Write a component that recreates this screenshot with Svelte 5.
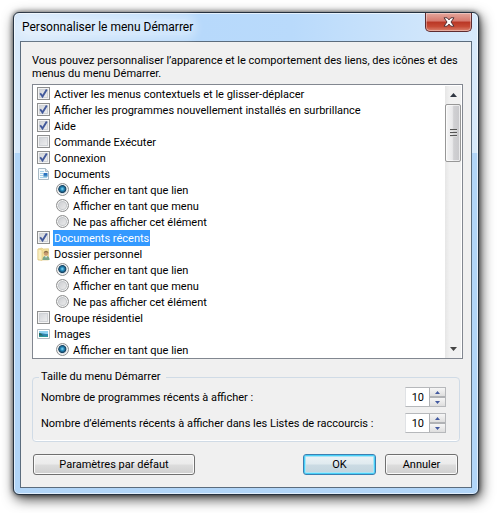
<script>
  let items = $state([
    { type: 'check', label: 'Activer les menus contextuels et le glisser-déplacer', checked: true },
    { type: 'check', label: 'Afficher les programmes nouvellement installés en surbrillance', checked: true },
    { type: 'check', label: 'Aide', checked: true },
    { type: 'check', label: 'Commande Exécuter', checked: false },
    { type: 'check', label: 'Connexion', checked: true },
    { type: 'group', icon: 'document', label: 'Documents' },
    { type: 'radio', group: 'documents', value: 'link', label: 'Afficher en tant que lien' },
    { type: 'radio', group: 'documents', value: 'menu', label: 'Afficher en tant que menu' },
    { type: 'radio', group: 'documents', value: 'hide', label: 'Ne pas afficher cet élément' },
    { type: 'check', label: 'Documents récents', checked: true },
    { type: 'group', icon: 'folder', label: 'Dossier personnel' },
    { type: 'radio', group: 'personal', value: 'link', label: 'Afficher en tant que lien' },
    { type: 'radio', group: 'personal', value: 'menu', label: 'Afficher en tant que menu' },
    { type: 'radio', group: 'personal', value: 'hide', label: 'Ne pas afficher cet élément' },
    { type: 'check', label: 'Groupe résidentiel', checked: false },
    { type: 'group', icon: 'image', label: 'Images' },
    { type: 'radio', group: 'images', value: 'link', label: 'Afficher en tant que lien' }
  ]);

  let choices = $state({ documents: 'link', personal: 'link', images: 'link' });
  let selected = $state(9);

  let counts = $state([
    { id: 'programs', label: 'Nombre de programmes récents à afficher :', value: 10 },
    { id: 'jumplist', label: 'Nombre d’éléments récents à afficher dans les Listes de raccourcis :', value: 10 }
  ]);

  function step(count, amount) {
    count.value = Math.max(0, count.value + amount);
  }
</script>

<div class="window">
  <header class="titlebar">
    <h1>Personnaliser le menu Démarrer</h1>
    <button class="close" aria-label="Fermer">
      <svg width="12" height="10" viewBox="0 0 12 10">
        <path d="M1 .8h3.200L6 2.900 7.800.8H11L8 5l3 4.200H7.800L6 7.100 4.200 9.200H1L4 5z" fill="#fff" stroke="#553236" stroke-width="1" stroke-linejoin="round" />
      </svg>
    </button>
  </header>

  <main class="panel">
    <p class="intro">Vous pouvez personnaliser l’apparence et le comportement des liens, des icônes et des menus du menu Démarrer.</p>

    <div class="list">
      <ul>
        {#each items as item, i}
          <li class={item.type}>
            {#if item.type === 'check'}
              <label onpointerdown={() => (selected = i)}>
                <span class="box">
                  <input type="checkbox" bind:checked={item.checked} />
                  {#if item.checked}
                    <svg width="13" height="13" viewBox="0 0 13 13">
                      <path d="M3.200 6.300l2.300 3.200L9.800 2.500" fill="none" stroke="#42599b" stroke-width="1.900" />
                    </svg>
                  {/if}
                </span>
                <span class="text" class:selected={selected === i}>{item.label}</span>
              </label>
            {:else if item.type === 'radio'}
              <label onpointerdown={() => (selected = i)}>
                <input type="radio" name={item.group} value={item.value} bind:group={choices[item.group]} />
                <span class="text" class:selected={selected === i}>{item.label}</span>
              </label>
            {:else}
              <svg class="icon" width="13" height="14" viewBox="0 0 13 14">
                {#if item.icon === 'document'}
                  <path d="M1.500 1.500h7l3 3v8h-10z" fill="#f5fafd" stroke="#a9bac5" />
                  <path d="M8.500 1.500v3h3" fill="#d5e2ea" stroke="#a9bac5" />
                  <path d="M3 4.500h4M3 6.500h3M3 8.500h3M3 10.500h7" stroke="#a4d0e8" />
                  <path d="M6.500 6h4v3.500h-4z" fill="#2671c0" />
                  <path d="M6.500 8.500h4v1h-4z" fill="#57a6cb" />
                {:else if item.icon === 'folder'}
                  <path d="M1 2L5 1l1 1 5.500-.3V13H1z" fill="#f3e09a" stroke="#dcc377" stroke-width=".6" />
                  <path d="M1 2l4 1v10.500L1 12.500z" fill="#faefc0" stroke="#e0c87c" stroke-width=".6" />
                  <path d="M5.500 13c0-2.500 1-4 3.500-4s3.600 1.500 3.600 4z" fill="#78a58a" />
                  <path d="M8 9l1 2 1.200-2z" fill="#e3eef2" />
                  <circle cx="9" cy="6.500" r="2.200" fill="#c99b72" />
                  <path d="M6.700 6.300c-.2-3.500 4.900-3.500 4.700 0-1.200-1.500-3.300-1.600-4.700 0z" fill="#8a7048" />
                {:else}
                  <path d="M.5 2.500h12v9H.5z" fill="#fff" stroke="#b4bcc1" />
                  <path d="M2 4h9v3H2z" fill="#8fd2f0" />
                  <path d="M2 6.500c4-1 5 .5 9 .5v3H2z" fill="#2f86b0" />
                  <path d="M2 6c2 0 3 2 5 2.500H2z" fill="#2a6a5c" />
                  <path d="M2 9h9v1H2z" fill="#2a9a97" />
                {/if}
              </svg>
              <span class="text">{item.label}</span>
            {/if}
          </li>
        {/each}
      </ul>
      <div class="scrollbar">
        <button aria-label="Défiler vers le haut">
          <svg width="7" height="4" viewBox="0 0 7 4"><path d="M0 4l3.500-4L7 4z" fill="#303642" /></svg>
        </button>
        <div class="track">
          <div class="thumb"><i></i><i></i><i></i></div>
        </div>
        <button aria-label="Défiler vers le bas">
          <svg width="7" height="4" viewBox="0 0 7 4"><path d="M0 0h7L3.500 4z" fill="#444" /></svg>
        </button>
      </div>
    </div>

    <fieldset>
      <legend>Taille du menu Démarrer</legend>
      {#each counts as count}
        <div class="count">
          <label for={count.id}>{count.label}</label>
          <div class="spinner">
            <input id={count.id} type="number" min="0" bind:value={count.value} />
            <div class="arrows">
              <button aria-label="Augmenter" onclick={() => step(count, 1)}>
                <svg width="5" height="3" viewBox="0 0 5 3"><path d="M0 3l2.500-3L5 3z" fill="#4259a0" /></svg>
              </button>
              <button aria-label="Diminuer" onclick={() => step(count, -1)}>
                <svg width="5" height="3" viewBox="0 0 5 3"><path d="M0 0h5L2.500 3z" fill="#4259a0" /></svg>
              </button>
            </div>
          </div>
        </div>
      {/each}
    </fieldset>

    <footer>
      <button class="btn reset">Paramètres par défaut</button>
      <button class="btn default">OK</button>
      <button class="btn">Annuler</button>
    </footer>
  </main>
</div>

<style>
  :global(body) {
    background: #fff;
    overflow: hidden;
  }

  .window,
  .window button,
  .window input {
    font-family: Roboto, "Open Sans", sans-serif;
    font-size: 11px;
    color: #000;
  }

  .window {
    margin: 12px 18px 18px 13px;
    padding: 0 6px 6px;
    border: 1px solid #25313f;
    border-radius: 6px;
    background:
      linear-gradient(90deg, #d9eafb, #b7d9fb 40%, #b9dafb 60%, #d8eafb) 0 0 / 100% 140px no-repeat,
      #b1d5f8;
    box-shadow:
      inset 0 0 0 1px rgba(255, 255, 255, 0.6),
      0 0 5px rgba(0, 0, 0, 0.6),
      2px 4px 13px rgba(0, 0, 0, 0.75);
  }

  .titlebar {
    display: flex;
    align-items: flex-start;
    justify-content: space-between;
    height: 28px;
  }

  .titlebar h1 {
    margin: 6px 0 0 2px;
    font-size: 12px;
    line-height: 16px;
    font-weight: normal;
    border-radius: 8px;
    background: rgba(255, 255, 255, 0.3);
    box-shadow: 0 0 8px 4px rgba(255, 255, 255, 0.3);
  }

  .close {
    display: flex;
    align-items: center;
    justify-content: center;
    width: 47px;
    height: 19px;
    padding: 0;
    border: 1px solid #5e2c30;
    border-top: none;
    border-radius: 0 0 5px 5px;
    background: linear-gradient(#e5a79d, #d6796d 45%, #b93625 50%, #c64a35 75%, #dc8470);
    box-shadow: inset 0 0 0 1px rgba(255, 255, 255, 0.35);
  }

  .panel {
    padding: 12px 8px 12px 11px;
    border: 1px solid #5b6c7d;
    background: #f0f0f0;
  }

  .intro {
    margin: 0 0 4px;
    line-height: 13px;
  }

  .list {
    display: flex;
    padding: 1px 1px 0 4px;
    border: 1px solid #828790;
    background: #fff;
  }

  .list ul {
    flex: 1;
    margin: 0;
    padding: 0;
    list-style: none;
  }

  .list li {
    display: flex;
    align-items: center;
    gap: 3px;
    height: 16px;
  }

  .list li.radio {
    padding-left: 19px;
  }

  .list label {
    display: flex;
    align-items: center;
    gap: 3px;
  }

  .text {
    padding: 1px 1px 0;
    line-height: 15px;
    white-space: nowrap;
  }

  .text.selected {
    background: #3399ff;
    color: #fff;
  }

  .box {
    position: relative;
    width: 13px;
    height: 13px;
  }

  .box svg {
    position: absolute;
    inset: 0;
    pointer-events: none;
  }

  .list input {
    display: block;
    appearance: none;
    width: 13px;
    height: 13px;
    margin: 0;
    border: 1px solid #8e8f8f;
  }

  .list .box,
  .list input[type='radio'] {
    margin-bottom: 1px;
  }

  .list input[type='checkbox'] {
    background: linear-gradient(135deg, #cdd0d5, #f3f3f3);
    box-shadow: inset 0 0 0 1px #f4f4f4, inset 0 0 0 2px #cfd2d6;
  }

  .list input[type='radio'] {
    border-radius: 50%;
    background: linear-gradient(135deg, #c6c8cc, #f2f2f2);
    box-shadow: inset 0 0 0 1px #f4f4f4, inset 0 0 0 2px #c5c8cb;
  }

  .list input[type='radio']:checked {
    background: radial-gradient(circle at 48% 45%, #8fdcf5 0, #2a8fc0 20%, #15405f 44%, #d5dde2 54%);
    box-shadow: inset 0 0 0 1px #f4f4f4;
  }

  .icon {
    flex: none;
  }

  .scrollbar {
    display: flex;
    flex-direction: column;
    width: 16px;
    background: linear-gradient(90deg, #e6e6e6, #f1f1f1 30%, #f1f1f1);
  }

  .scrollbar button {
    display: flex;
    align-items: center;
    justify-content: center;
    height: 18px;
    padding: 0;
    border: none;
    background: none;
  }

  .track {
    flex: 1;
  }

  .thumb {
    display: flex;
    flex-direction: column;
    align-items: center;
    justify-content: center;
    gap: 1px;
    height: 58px;
    box-sizing: border-box;
    border: 1px solid #979797;
    border-radius: 2px;
    background: linear-gradient(90deg, #f5f5f5, #e9e9eb 45%, #d0d0d3 55%, #c8c8cb);
    box-shadow: inset 0 0 0 1px rgba(255, 255, 255, 0.6);
  }

  .thumb i {
    width: 7px;
    height: 1px;
    background: #555;
    border-bottom: 1px solid #ddd;
  }

  fieldset {
    margin: 11px 3px 0 0;
    padding: 3px 13px 8px 8px;
    border: 1px solid #d0dbe6;
    border-radius: 4px;
    box-shadow: inset 0 -1px 0 #fff;
    min-width: 0;
  }

  legend {
    margin-left: -2px;
    padding: 0 6px 0 2px;
    line-height: 14px;
    background: #f0f0f0;
  }

  .count {
    display: flex;
    align-items: center;
    justify-content: space-between;
    height: 20px;
  }

  .count + .count {
    margin-top: 6px;
  }

  .spinner {
    display: flex;
    height: 20px;
    width: 41px;
    box-sizing: border-box;
    border: 1px solid #b6b8bb;
    border-left-color: #e0e2e5;
    background: #fff;
  }

  .spinner input {
    appearance: textfield;
    flex: 1;
    min-width: 0;
    padding: 0 5px 0 0;
    border: none;
    text-align: right;
    background: none;
    outline: none;
  }

  .spinner input::-webkit-inner-spin-button {
    appearance: none;
    display: none;
  }

  .arrows {
    display: flex;
    flex-direction: column;
    width: 16px;
  }

  .arrows button {
    flex: 1;
    display: flex;
    align-items: center;
    justify-content: center;
    padding: 0;
    border: 1px solid #b0b2b5;
    border-width: 0 0 1px 1px;
    background: linear-gradient(#f6f6f6, #dedede);
  }

  .arrows button:last-child {
    border-width: 1px 0 0 1px;
  }

  footer {
    display: flex;
    gap: 9px;
    margin: 12px 5px 0 1px;
  }

  .btn {
    width: 73px;
    height: 21px;
    padding: 0;
    border: 1px solid #707070;
    border-radius: 3px;
    background: linear-gradient(#f2f2f2, #ebebeb 48%, #dddddd 52%, #cfcfcf);
    box-shadow: inset 0 0 0 1px #fafafa;
    line-height: 17px;
  }

  .btn.reset {
    width: 162px;
    margin-right: auto;
  }

  .btn.default {
    border-color: #3c7fb1;
    background: linear-gradient(#edf3f6, #dfeaef 48%, #cbdbe3 52%, #c2d4de);
    box-shadow: inset 0 0 0 1px #48d0f8, inset 0 0 0 2px #a8e4f6;
  }
</style>
